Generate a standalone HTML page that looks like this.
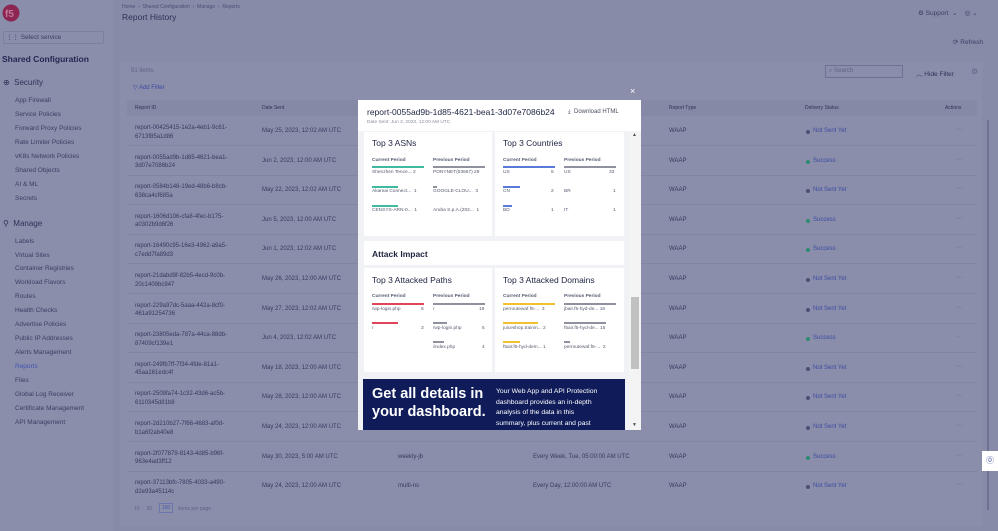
<!DOCTYPE html>
<html><head><meta charset="utf-8"><style>
*{box-sizing:border-box;margin:0;padding:0}
body{width:998px;height:531px;overflow:hidden;font-family:"Liberation Sans",sans-serif;background:#878ba8;position:relative;color:#2f3356}
.a{position:absolute;white-space:nowrap}
.side{position:absolute;left:0;top:0;width:113px;height:531px;background:#8a8eab}
.s{font-size:6.5px;color:#3a3f62}
.card{position:absolute;left:120px;top:62px;width:862px;height:464px;background:#8a8eab}
.t{font-size:6px;color:#363b5e}
.lk{font-size:6px;color:#3b4aa0}
.dot{position:absolute;width:4px;height:4px;border-radius:2px;background:#4b5075}
.modal{position:absolute;left:358px;top:100px;width:283px;height:330px;background:#fff;overflow:hidden}
.mc{position:absolute;background:#fff}
.h{font-size:8.5px;color:#1e2340}
.sm{font-size:4.8px;color:#555a70}
.bar{position:absolute;height:2px}
</style></head><body>
<div class="side">
<svg class="a" style="left:2px;top:4px" width="18" height="18" viewBox="0 0 18 18"><circle cx="9" cy="9" r="8.5" fill="#8c2552"/><text x="3" y="13" font-size="10" font-weight="bold" fill="#c07a98" font-family="Liberation Sans">f5</text></svg>
<div class="a" style="left:3px;top:31px;width:101px;height:13px;border:1px solid #7c809d;border-radius:2px"></div>
<div class="a s" style="left:6px;top:33px;font-size:6.5px">⋮⋮ Select service</div>
<div class="a" style="left:2px;top:54px;font-size:8.5px;font-weight:bold;color:#222850">Shared Configuration</div>
<div class="a" style="left:3px;top:78px;font-size:8px;color:#2c3257">⊕ &nbsp;Security</div>
<div class="a s" style="left:15px;top:97px">App Firewall</div>
<div class="a s" style="left:15px;top:111px">Service Policies</div>
<div class="a s" style="left:15px;top:125px">Forward Proxy Policies</div>
<div class="a s" style="left:15px;top:139px">Rate Limiter Policies</div>
<div class="a s" style="left:15px;top:153px">vK8s Network Policies</div>
<div class="a s" style="left:15px;top:167px">Shared Objects</div>
<div class="a s" style="left:15px;top:181px">AI &amp; ML</div>
<div class="a s" style="left:15px;top:195px">Secrets</div>
<div class="a" style="left:3px;top:219px;font-size:8px;color:#2c3257">⚲ &nbsp;Manage</div>
<div class="a s" style="left:15px;top:238px">Labels</div>
<div class="a s" style="left:15px;top:252px">Virtual Sites</div>
<div class="a s" style="left:15px;top:265px">Container Registries</div>
<div class="a s" style="left:15px;top:279px">Workload Flavors</div>
<div class="a s" style="left:15px;top:293px">Routes</div>
<div class="a s" style="left:15px;top:307px">Health Checks</div>
<div class="a s" style="left:15px;top:321px">Advertise Policies</div>
<div class="a s" style="left:15px;top:335px">Public IP Addresses</div>
<div class="a s" style="left:15px;top:349px">Alerts Management</div>
<div class="a s" style="left:15px;top:363px;color:#4353b0">Reports</div>
<div class="a s" style="left:15px;top:377px">Files</div>
<div class="a s" style="left:15px;top:391px">Global Log Receiver</div>
<div class="a s" style="left:15px;top:405px">Certificate Management</div>
<div class="a s" style="left:15px;top:419px">API Management</div>
</div>
<div class="a" style="left:122px;top:4px;font-size:5px;color:#4a4f72">Home &nbsp;›&nbsp; Shared Configuration &nbsp;›&nbsp; Manage &nbsp;›&nbsp; Reports</div>
<div class="a" style="left:122px;top:12px;font-size:8.5px;color:#2c3257">Report History</div>
<div class="a" style="left:918px;top:9px;font-size:6.5px;color:#3a3f62">⚙ Support &nbsp;⌄ &nbsp;&nbsp;&nbsp;◎ ⌄</div>
<div class="a" style="left:953px;top:38px;font-size:6.5px;color:#3a3f62">⟳ Refresh</div>
<div class="card"></div>
<div class="a" style="left:131px;top:68px;font-size:6px;color:#5f6486">51 items</div>
<div class="a lk" style="left:133px;top:84px">▽ Add Filter</div>
<div class="a" style="left:825px;top:65px;width:78px;height:13px;border:1px solid #6e7292"></div>
<div class="a" style="left:829px;top:68px;font-size:6px;color:#5f6486">⌕ Search</div>
<div class="a" style="left:916px;top:68px;font-size:6.5px;color:#2f3356">︿ Hide Filter</div>
<div class="a" style="left:971px;top:67px;font-size:8px;color:#5f6486">⚙</div>
<div class="a" style="left:127px;top:100px;width:850px;height:16px;background:#8589a6"></div>
<div class="a" style="left:135px;top:105px;font-size:5px;color:#2f3356">Report ID</div>
<div class="a" style="left:262px;top:105px;font-size:5px;color:#2f3356">Date Sent</div>
<div class="a" style="left:669px;top:105px;font-size:5px;color:#2f3356">Report Type</div>
<div class="a" style="left:805px;top:105px;font-size:5px;color:#2f3356">Delivery Status</div>
<div class="a" style="left:945px;top:105px;font-size:5px;color:#2f3356">Actions</div>
<div class="a" style="left:987px;top:120px;width:2px;height:390px;background:#6d7192"></div>
<div id="rows"></div>
<script>
var R=[["00425415-1e2a-4eb1-9c61-","6713f85a1d86","May 25, 2023, 12:02 AM UTC",0],
["0055ad9b-1d85-4621-bea1-","3d07e7086b24","Jun 2, 2023, 12:00 AM UTC",1],
["0584b148-19ed-48b6-b8cb-","638ca4cf685a","May 22, 2023, 12:02 AM UTC",0],
["1606d106-cfa8-4fec-b175-","a0302b9d6f26","Jun 5, 2023, 12:00 AM UTC",1],
["16490c95-16e3-4962-a9a5-","c7edd7fa89d3","Jun 1, 2023, 12:02 AM UTC",1],
["21dabd9f-82b5-4ecd-9c0b-","20c1409bc947","May 26, 2023, 12:00 AM UTC",0],
["229a97dc-5aaa-442a-8cf0-","461a91254736","May 27, 2023, 12:02 AM UTC",0],
["23805eda-787a-44ca-88db-","87409cf139e1","Jun 4, 2023, 12:02 AM UTC",1],
["249fb7ff-7f34-4fde-81a1-","45aa161edc4f","May 18, 2023, 12:00 AM UTC",0],
["2509fa74-1c32-43d6-ac5b-","6110345d81b8","May 28, 2023, 12:00 AM UTC",0],
["2d210b27-7f66-4683-af0d-","b1a6f2ab40e8","May 24, 2023, 12:00 AM UTC",0],
["2f077879-8143-4d85-b96f-","963e4ad3ff12","May 30, 2023, 5:00 AM UTC",1,"weekly-jb","Every Week, Tue, 05:00:00 AM UTC"],
["37113bfc-7805-4033-a490-","d2e93a45114c","May 24, 2023, 12:00 AM UTC",0,"multi-ns","Every Day, 12:00:00 AM UTC"]];
var h="";R.forEach(function(r,i){var y=131+i*29.6;
h+='<div class="a t" style="left:135px;top:'+(y-7)+'px;line-height:8.5px">report-'+r[0]+'<br>'+r[1]+'</div>';
h+='<div class="a t" style="left:262px;top:'+(y-3)+'px">'+r[2]+'</div>';
if(r[4]){h+='<div class="a t" style="left:398px;top:'+(y-3)+'px">'+r[4]+'</div><div class="a t" style="left:533px;top:'+(y-3)+'px">'+r[5]+'</div>';}
h+='<div class="a t" style="left:669px;top:'+(y-3)+'px">WAAP</div>';
h+='<div class="dot" style="left:806px;top:'+(y-1)+'px;'+(r[3]?'background:#2f8a72':'')+'"></div>';
h+='<div class="a lk" style="left:813px;top:'+(y-3)+'px">'+(r[3]?'Success':'Not Sent Yet')+'</div>';
h+='<div class="a" style="left:956px;top:'+(y-5)+'px;font-size:7px;color:#5f6486">···</div>';
if(i<12)h+='<div class="a" style="left:127px;top:'+(y+14)+'px;width:850px;height:1px;background:#8185a2"></div>';});
document.getElementById("rows").innerHTML=h;
</script>
<div class="a" style="left:134px;top:506px;font-size:5px;color:#5f6486">10 &nbsp;&nbsp;&nbsp; 50</div>
<div class="a" style="left:159px;top:503px;width:14px;height:10px;border:1px solid #6d75b0;font-size:5px;color:#4a57a8;text-align:center;line-height:8px">100</div>
<div class="a" style="left:178px;top:506px;font-size:5px;color:#5f6486">items per page</div>
<div class="a" style="left:982px;top:451px;width:16px;height:20px;background:#fff"></div>
<div class="a" style="left:986px;top:455px;font-size:8px;color:#4a57a8">⓪</div>
<div class="a" style="left:630px;top:86px;font-size:9px;color:#fff">×</div>
<div class="modal">
<div class="a" style="left:0;top:31px;width:283px;height:299px;background:#f1f2f5"></div>
<div class="a h" style="left:9px;top:7px;font-size:8.5px">report-0055ad9b-1d85-4621-bea1-3d07e7086b24</div>
<div class="a sm" style="left:9px;top:20px;color:#8a8ea0">Date Sent: Jun 2, 2023, 12:00 AM UTC</div>
<div class="a" style="left:210px;top:9px;font-size:6px;color:#4a4f62">⤓ &nbsp;Download HTML</div>
<div class="mc" style="left:6px;top:32px;width:128px;height:104px"></div>
<div class="mc" style="left:137px;top:32px;width:129px;height:104px"></div>
<div class="a h" style="left:14px;top:38px">Top 3 ASNs</div>
<div class="a h" style="left:145px;top:38px">Top 3 Countries</div>
<div class="a sm" style="left:14px;top:58px;font-weight:bold">Current Period</div>
<div class="a sm" style="left:75px;top:58px;font-weight:bold">Previous Period</div>
<div class="a sm" style="left:145px;top:58px;font-weight:bold">Current Period</div>
<div class="a sm" style="left:206px;top:58px;font-weight:bold">Previous Period</div>
<div class="bar" style="left:14px;top:66px;width:52px;background:#3fb9a0"></div>
<div class="bar" style="left:14px;top:86px;width:26px;background:#3fb9a0"></div>
<div class="bar" style="left:14px;top:105px;width:26px;background:#3fb9a0"></div>
<div class="bar" style="left:75px;top:66px;width:52px;background:#8f929e"></div>
<div class="bar" style="left:75px;top:86px;width:4px;background:#8f929e"></div>
<div class="bar" style="left:145px;top:66px;width:52px;background:#5a7ad8"></div>
<div class="bar" style="left:145px;top:86px;width:17px;background:#5a7ad8"></div>
<div class="bar" style="left:145px;top:105px;width:9px;background:#5a7ad8"></div>
<div class="bar" style="left:206px;top:66px;width:52px;background:#8f929e"></div>
<div class="a sm" style="left:14px;top:70px">Shenzhen Tence... 2</div>
<div class="a sm" style="left:75px;top:70px">PONYNET(53667) 29</div>
<div class="a sm" style="left:14px;top:89px">Akamai Connect... &nbsp;1</div>
<div class="a sm" style="left:75px;top:89px">GOOGLE-CLOU... &nbsp;3</div>
<div class="a sm" style="left:14px;top:108px">CENSYS-ARN-0... &nbsp;1</div>
<div class="a sm" style="left:75px;top:108px">Aruba S.p.A.(202... &nbsp;1</div>
<div class="a sm" style="left:145px;top:70px">US</div><div class="a sm" style="left:193px;top:70px">6</div>
<div class="a sm" style="left:206px;top:70px">US</div><div class="a sm" style="left:251px;top:70px">33</div>
<div class="a sm" style="left:145px;top:89px">CN</div><div class="a sm" style="left:193px;top:89px">2</div>
<div class="a sm" style="left:206px;top:89px">BR</div><div class="a sm" style="left:255px;top:89px">1</div>
<div class="a sm" style="left:145px;top:108px">BD</div><div class="a sm" style="left:193px;top:108px">1</div>
<div class="a sm" style="left:206px;top:108px">IT</div><div class="a sm" style="left:255px;top:108px">1</div>
<div class="mc" style="left:6px;top:141px;width:260px;height:24px"></div>
<div class="a h" style="left:14px;top:149px;font-weight:bold">Attack Impact</div>
<div class="mc" style="left:6px;top:168px;width:128px;height:104px"></div>
<div class="mc" style="left:137px;top:168px;width:129px;height:104px"></div>
<div class="a h" style="left:14px;top:175px">Top 3 Attacked Paths</div>
<div class="a h" style="left:145px;top:175px">Top 3 Attacked Domains</div>
<div class="a sm" style="left:14px;top:194px;font-weight:bold">Current Period</div>
<div class="a sm" style="left:75px;top:194px;font-weight:bold">Previous Period</div>
<div class="a sm" style="left:145px;top:194px;font-weight:bold">Current Period</div>
<div class="a sm" style="left:206px;top:194px;font-weight:bold">Previous Period</div>
<div class="bar" style="left:14px;top:203px;width:52px;background:#e0455a"></div>
<div class="bar" style="left:14px;top:222px;width:26px;background:#e0455a"></div>
<div class="bar" style="left:75px;top:203px;width:52px;background:#8f929e"></div>
<div class="bar" style="left:75px;top:222px;width:14px;background:#8f929e"></div>
<div class="bar" style="left:75px;top:241px;width:11px;background:#8f929e"></div>
<div class="bar" style="left:145px;top:203px;width:52px;background:#efc12e"></div>
<div class="bar" style="left:145px;top:222px;width:35px;background:#efc12e"></div>
<div class="bar" style="left:145px;top:241px;width:17px;background:#efc12e"></div>
<div class="bar" style="left:206px;top:203px;width:52px;background:#8f929e"></div>
<div class="bar" style="left:206px;top:222px;width:42px;background:#8f929e"></div>
<div class="bar" style="left:206px;top:241px;width:6px;background:#8f929e"></div>
<div class="a sm" style="left:14px;top:207px">/wp-login.php</div><div class="a sm" style="left:63px;top:207px">6</div>
<div class="a sm" style="left:75px;top:207px">/</div><div class="a sm" style="left:121px;top:207px">18</div>
<div class="a sm" style="left:14px;top:226px">/</div><div class="a sm" style="left:63px;top:226px">3</div>
<div class="a sm" style="left:75px;top:226px">/wp-login.php</div><div class="a sm" style="left:124px;top:226px">5</div>
<div class="a sm" style="left:75px;top:245px">/index.php</div><div class="a sm" style="left:124px;top:245px">4</div>
<div class="a sm" style="left:145px;top:207px">perroutewaf.f5-... &nbsp;3</div>
<div class="a sm" style="left:206px;top:207px">jbair.f5-hyd-de... 16</div>
<div class="a sm" style="left:145px;top:226px">juiceshop.trainin... 2</div>
<div class="a sm" style="left:206px;top:226px">f5air.f5-hyd-de... 15</div>
<div class="a sm" style="left:145px;top:245px">f5air.f5-hyd-dem... 1</div>
<div class="a sm" style="left:206px;top:245px">perroutewaf.f5-... &nbsp;2</div>
<div class="a" style="left:5px;top:279px;width:262px;height:51px;background:#101c5a"></div>
<div class="a" style="left:14px;top:285px;font-size:14.5px;font-weight:bold;color:#fff;line-height:18px">Get all details in<br>your dashboard.</div>
<div class="a" style="left:138px;top:287px;font-size:6.8px;color:#fff;line-height:10.5px">Your Web App and API Protection<br>dashboard provides an in-depth<br>analysis of the data in this<br>summary, plus current and past</div>
<div class="a" style="left:271px;top:31px;width:12px;height:299px;background:#f4f4f4"></div>
<div class="a" style="left:273px;top:197px;width:8px;height:72px;background:#c1c1c1"></div>
<div class="a" style="left:274px;top:32px;font-size:5px;color:#505050">▲</div>
<div class="a" style="left:274px;top:322px;font-size:5px;color:#505050">▼</div>
</div>
</body></html>
